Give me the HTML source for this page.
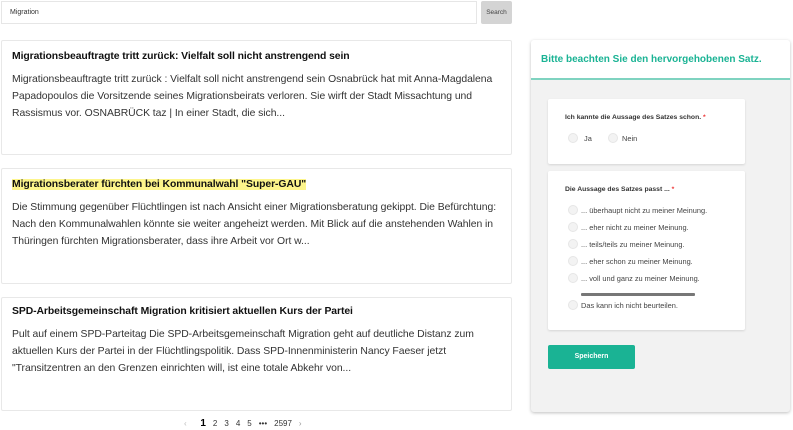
<!DOCTYPE html>
<html><head><meta charset="utf-8"><style>
*{box-sizing:border-box;margin:0;padding:0}
body{width:793px;height:430px;background:#fff;font-family:"Liberation Sans",sans-serif;color:#222;position:relative;overflow:hidden}
.abs{position:absolute}
.inp{left:1px;top:1px;width:476px;height:23px;border:1px solid #e6e6e6;font-size:7px;padding:7px 8px;color:#333}
.btn{left:481px;top:1px;width:31px;height:23px;background:#d4d4d4;font-size:6.5px;color:#444;text-align:center;line-height:23px;border-radius:2px}
.card{left:1px;width:511px;border:1px solid #e8e8e8;border-radius:2px;padding:0 10px}
.card h3{font-size:10.4px;font-weight:bold;color:#111;margin-top:7px;height:17px;line-height:17px;letter-spacing:-0.08px}
.card p{font-size:10.4px;line-height:17px;color:#333;margin-top:6px;letter-spacing:-0.05px;white-space:nowrap}
.hl{background:#fdf58b}
.pag{top:418px;left:184px;font-size:8px;color:#333;word-spacing:0}
.pag span{margin-right:7px}
.panel{left:531px;top:40px;width:259px;height:372px;background:#f2f2f2;border-radius:3px;box-shadow:0 1px 3px rgba(0,0,0,.25)}
.ph{height:40px;background:#fff;border-bottom:2px solid #7fd3c0;color:#1ab394;font-weight:bold;font-size:10px;padding:14px 10px;border-radius:3px 3px 0 0}
.ic{left:17px;width:197px;background:#fff;box-shadow:0 1px 2px rgba(0,0,0,.12);border-radius:2px}
.q{font-size:6.8px;font-weight:bold;color:#333}
.q b{color:#e33}
.r{position:absolute;width:10px;height:10px;border-radius:50%;background:#f3f3f3;border:1px solid #e6e6e6}
.lab{position:absolute;font-size:7.4px;color:#444}
.save{left:17px;top:305px;width:87px;height:24px;background:#1ab394;color:#fff;font-size:7px;font-weight:bold;text-align:center;line-height:24px;border-radius:2px}
</style></head><body>
<div class="abs inp">Migration</div>
<div class="abs btn">Search</div>

<div class="abs card" style="top:40px;height:115px"><h3>Migrationsbeauftragte tritt zurück: Vielfalt soll nicht anstrengend sein</h3>
<p>Migrationsbeauftragte tritt zurück : Vielfalt soll nicht anstrengend sein Osnabrück hat mit Anna-Magdalena<br>Papadopoulos die Vorsitzende seines Migrationsbeirats verloren. Sie wirft der Stadt Missachtung und<br>Rassismus vor. OSNABRÜCK taz | In einer Stadt, die sich...</p></div>

<div class="abs card" style="top:168px;height:116px"><h3 style="margin-top:7px"><span class="hl">Migrationsberater fürchten bei Kommunalwahl "Super-GAU"</span></h3>
<p>Die Stimmung gegenüber Flüchtlingen ist nach Ansicht einer Migrationsberatung gekippt. Die Befürchtung:<br>Nach den Kommunalwahlen könnte sie weiter angeheizt werden. Mit Blick auf die anstehenden Wahlen in<br>Thüringen fürchten Migrationsberater, dass ihre Arbeit vor Ort w...</p></div>

<div class="abs card" style="top:297px;height:114px"><h3 style="margin-top:5px">SPD-Arbeitsgemeinschaft Migration kritisiert aktuellen Kurs der Partei</h3>
<p>Pult auf einem SPD-Parteitag Die SPD-Arbeitsgemeinschaft Migration geht auf deutliche Distanz zum<br>aktuellen Kurs der Partei in der Flüchtlingspolitik. Dass SPD-Innenministerin Nancy Faeser jetzt<br>"Transitzentren an den Grenzen einrichten will, ist eine totale Abkehr von...</p></div>

<div class="abs pag"><span style="color:#bbb">‹</span> &nbsp; <span style="font-size:10px;font-weight:bold;color:#000">1</span><span>2</span><span>3</span><span>4</span><span>5</span><span>•••</span><span>2597</span><span style="color:#999">›</span></div>

<div class="abs panel">
<div class="ph">Bitte beachten Sie den hervorgehobenen Satz.</div>
<div class="abs ic" style="top:59px;height:65px">
 <div class="q abs" style="left:17px;top:15px">Ich kannte die Aussage des Satzes schon. <b>*</b></div>
 <div class="r" style="left:20px;top:34px"></div><div class="lab" style="left:36px;top:35px">Ja</div>
 <div class="r" style="left:60px;top:34px"></div><div class="lab" style="left:74px;top:35px">Nein</div>
</div>
<div class="abs ic" style="top:131px;height:159px">
 <div class="q abs" style="left:17px;top:15px">Die Aussage des Satzes passt ... <b>*</b></div>
 <div class="r" style="left:20px;top:34px"></div><div class="lab" style="left:33px;top:35px">... überhaupt nicht zu meiner Meinung.</div>
 <div class="r" style="left:20px;top:51px"></div><div class="lab" style="left:33px;top:52px">... eher nicht zu meiner Meinung.</div>
 <div class="r" style="left:20px;top:68px"></div><div class="lab" style="left:33px;top:69px">... teils/teils zu meiner Meinung.</div>
 <div class="r" style="left:20px;top:85px"></div><div class="lab" style="left:33px;top:86px">... eher schon zu meiner Meinung.</div>
 <div class="r" style="left:20px;top:102px"></div><div class="lab" style="left:33px;top:103px">... voll und ganz zu meiner Meinung.</div>
 <div class="abs" style="left:33px;top:122px;width:114px;height:3px;background:#777;border-radius:1px"></div>
 <div class="r" style="left:20px;top:129px"></div><div class="lab" style="left:33px;top:130px">Das kann ich nicht beurteilen.</div>
</div>
<div class="abs save">Speichern</div>
</div>
</body></html>
